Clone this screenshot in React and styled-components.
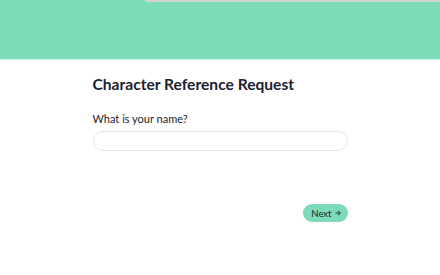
import React, { useState } from 'react';
import styled, { createGlobalStyle } from 'styled-components';

const GlobalStyle = createGlobalStyle`
  body {
    margin: 0;
    background: #ffffff;
    font-family: Lato, "Open Sans", sans-serif;
  }
`;

const Header = styled.header`
  position: relative;
  height: 59px;
  background: #7ddcb7;
  border-bottom: 1px solid #c9f1e1;
`;

const Progress = styled.div`
  position: absolute;
  top: 0;
  left: ${(p) => p.$done}%;
  right: 0;
  height: 2px;
  background: #cfd3d1;
`;

const Main = styled.main`
  width: 255px;
  margin: 0 auto;
  padding-top: 14px;
  display: flex;
  flex-direction: column;
`;

const Title = styled.h1`
  margin: 0;
  font-size: 15.6px;
  font-weight: 700;
  color: #1c2330;
  line-height: 20px;
`;

const Label = styled.label`
  margin-top: 18px;
  font-size: 11px;
  color: #1c2330;
  line-height: 14px;
`;

const Input = styled.input`
  margin-top: 5px;
  height: 20px;
  box-sizing: border-box;
  border: 1px solid #e4e6e6;
  border-radius: 10px;
  padding: 0 10px;
  font-family: inherit;
  font-size: 11px;
  outline: none;
`;

const Footer = styled.div`
  margin-top: 53px;
  display: flex;
  justify-content: flex-end;
`;

const NextButton = styled.button`
  height: 18px;
  padding: 0 7px 0 8px;
  border: none;
  border-radius: 9px;
  background: #7ddcb7;
  color: #1c2330;
  font-family: inherit;
  font-size: 9.5px;
  display: flex;
  align-items: center;
  gap: 3px;
  cursor: pointer;
`;

const Arrow = () => (
  <svg width="6" height="6" viewBox="0 0 6 6" fill="none" stroke="#1c2330" strokeWidth="0.9">
    <path d="M0.5 3H5.3M3 0.8L5.3 3L3 5.2" />
  </svg>
);

export default function App() {
  const [name, setName] = useState('');
  return (
    <>
      <GlobalStyle />
      <Header>
        <Progress $done={33} />
      </Header>
      <Main>
        <Title>Character Reference Request</Title>
        <Label htmlFor="name">What is your name?</Label>
        <Input id="name" value={name} onChange={(e) => setName(e.target.value)} />
        <Footer>
          <NextButton>
            Next
            <Arrow />
          </NextButton>
        </Footer>
      </Main>
    </>
  );
}
